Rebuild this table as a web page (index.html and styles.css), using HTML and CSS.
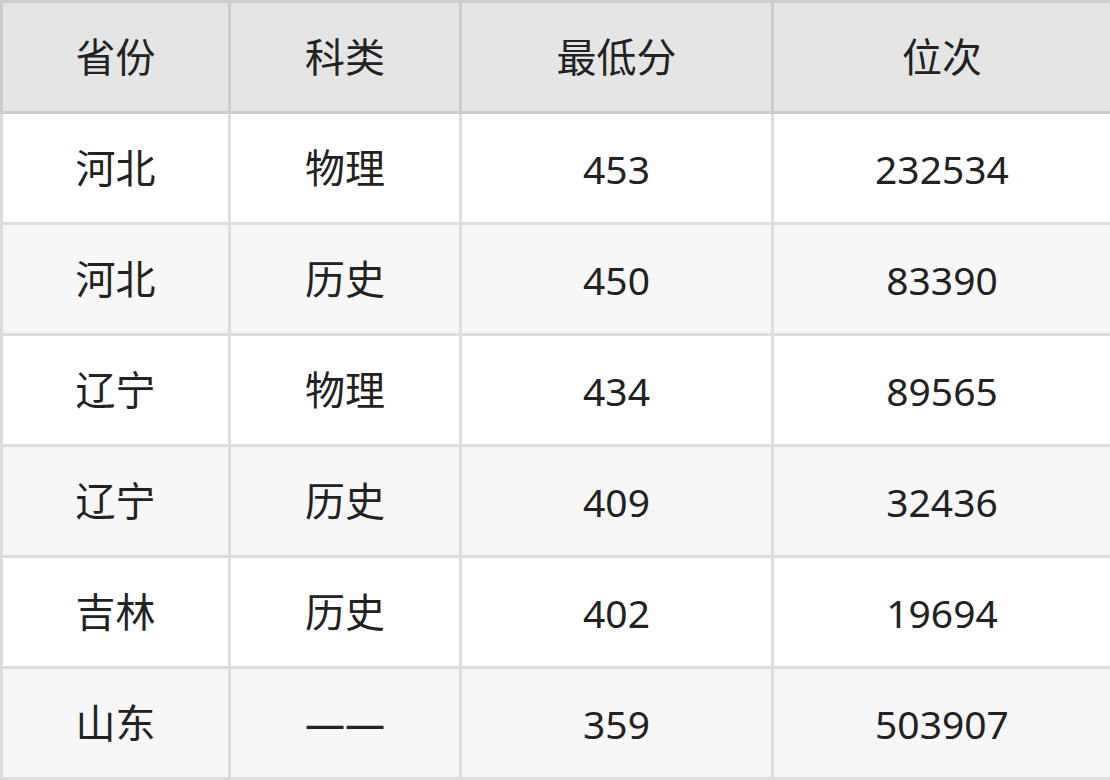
FILE: index.html
```html
<!DOCTYPE html>
<html lang="zh-CN">
<head>
<meta charset="utf-8">
<title>分数线</title>
<link rel="stylesheet" href="styles.css">
</head>
<body>
<table class="score-table">
  <colgroup>
    <col class="c1"><col class="c2"><col class="c3"><col class="c4">
  </colgroup>
  <thead>
    <tr><th>省份</th><th>科类</th><th>最低分</th><th>位次</th></tr>
  </thead>
  <tbody>
    <tr><td>河北</td><td>物理</td><td class="num">453</td><td class="num">232534</td></tr>
    <tr><td>河北</td><td>历史</td><td class="num">450</td><td class="num">83390</td></tr>
    <tr><td>辽宁</td><td>物理</td><td class="num">434</td><td class="num">89565</td></tr>
    <tr><td>辽宁</td><td>历史</td><td class="num">409</td><td class="num">32436</td></tr>
    <tr><td>吉林</td><td>历史</td><td class="num">402</td><td class="num">19694</td></tr>
    <tr><td>山东</td><td>——</td><td class="num">359</td><td class="num">503907</td></tr>
  </tbody>
</table>
</body>
</html>
```
FILE: styles.css
```css
html, body {
  margin: 0;
  padding: 0;
  background: #ffffff;
}
.score-table {
  border-collapse: collapse;
  table-layout: fixed;
  width: 1110px;
  font-family: "Noto Sans", "Noto Sans CJK SC", sans-serif;
  font-size: 40px;
  color: #222222;
}
.c1 { width: 228px; }
.c2 { width: 231px; }
.c3 { width: 312px; }
.c4 { width: 339px; }
.score-table th,
.score-table td {
  height: 108px;
  padding: 0;
  text-align: center;
  vertical-align: middle;
  font-weight: normal;
  line-height: 1;
  border: 3px solid #dddddd;
}
.score-table td.num {
  font-size: 39px;
}
.score-table th {
  background: #e5e5e5;
  border-color: #cccccc;
}
.score-table tbody tr:nth-child(odd) td { background: #ffffff; }
.score-table tbody tr:nth-child(even) td { background: #f7f7f7; }
```
